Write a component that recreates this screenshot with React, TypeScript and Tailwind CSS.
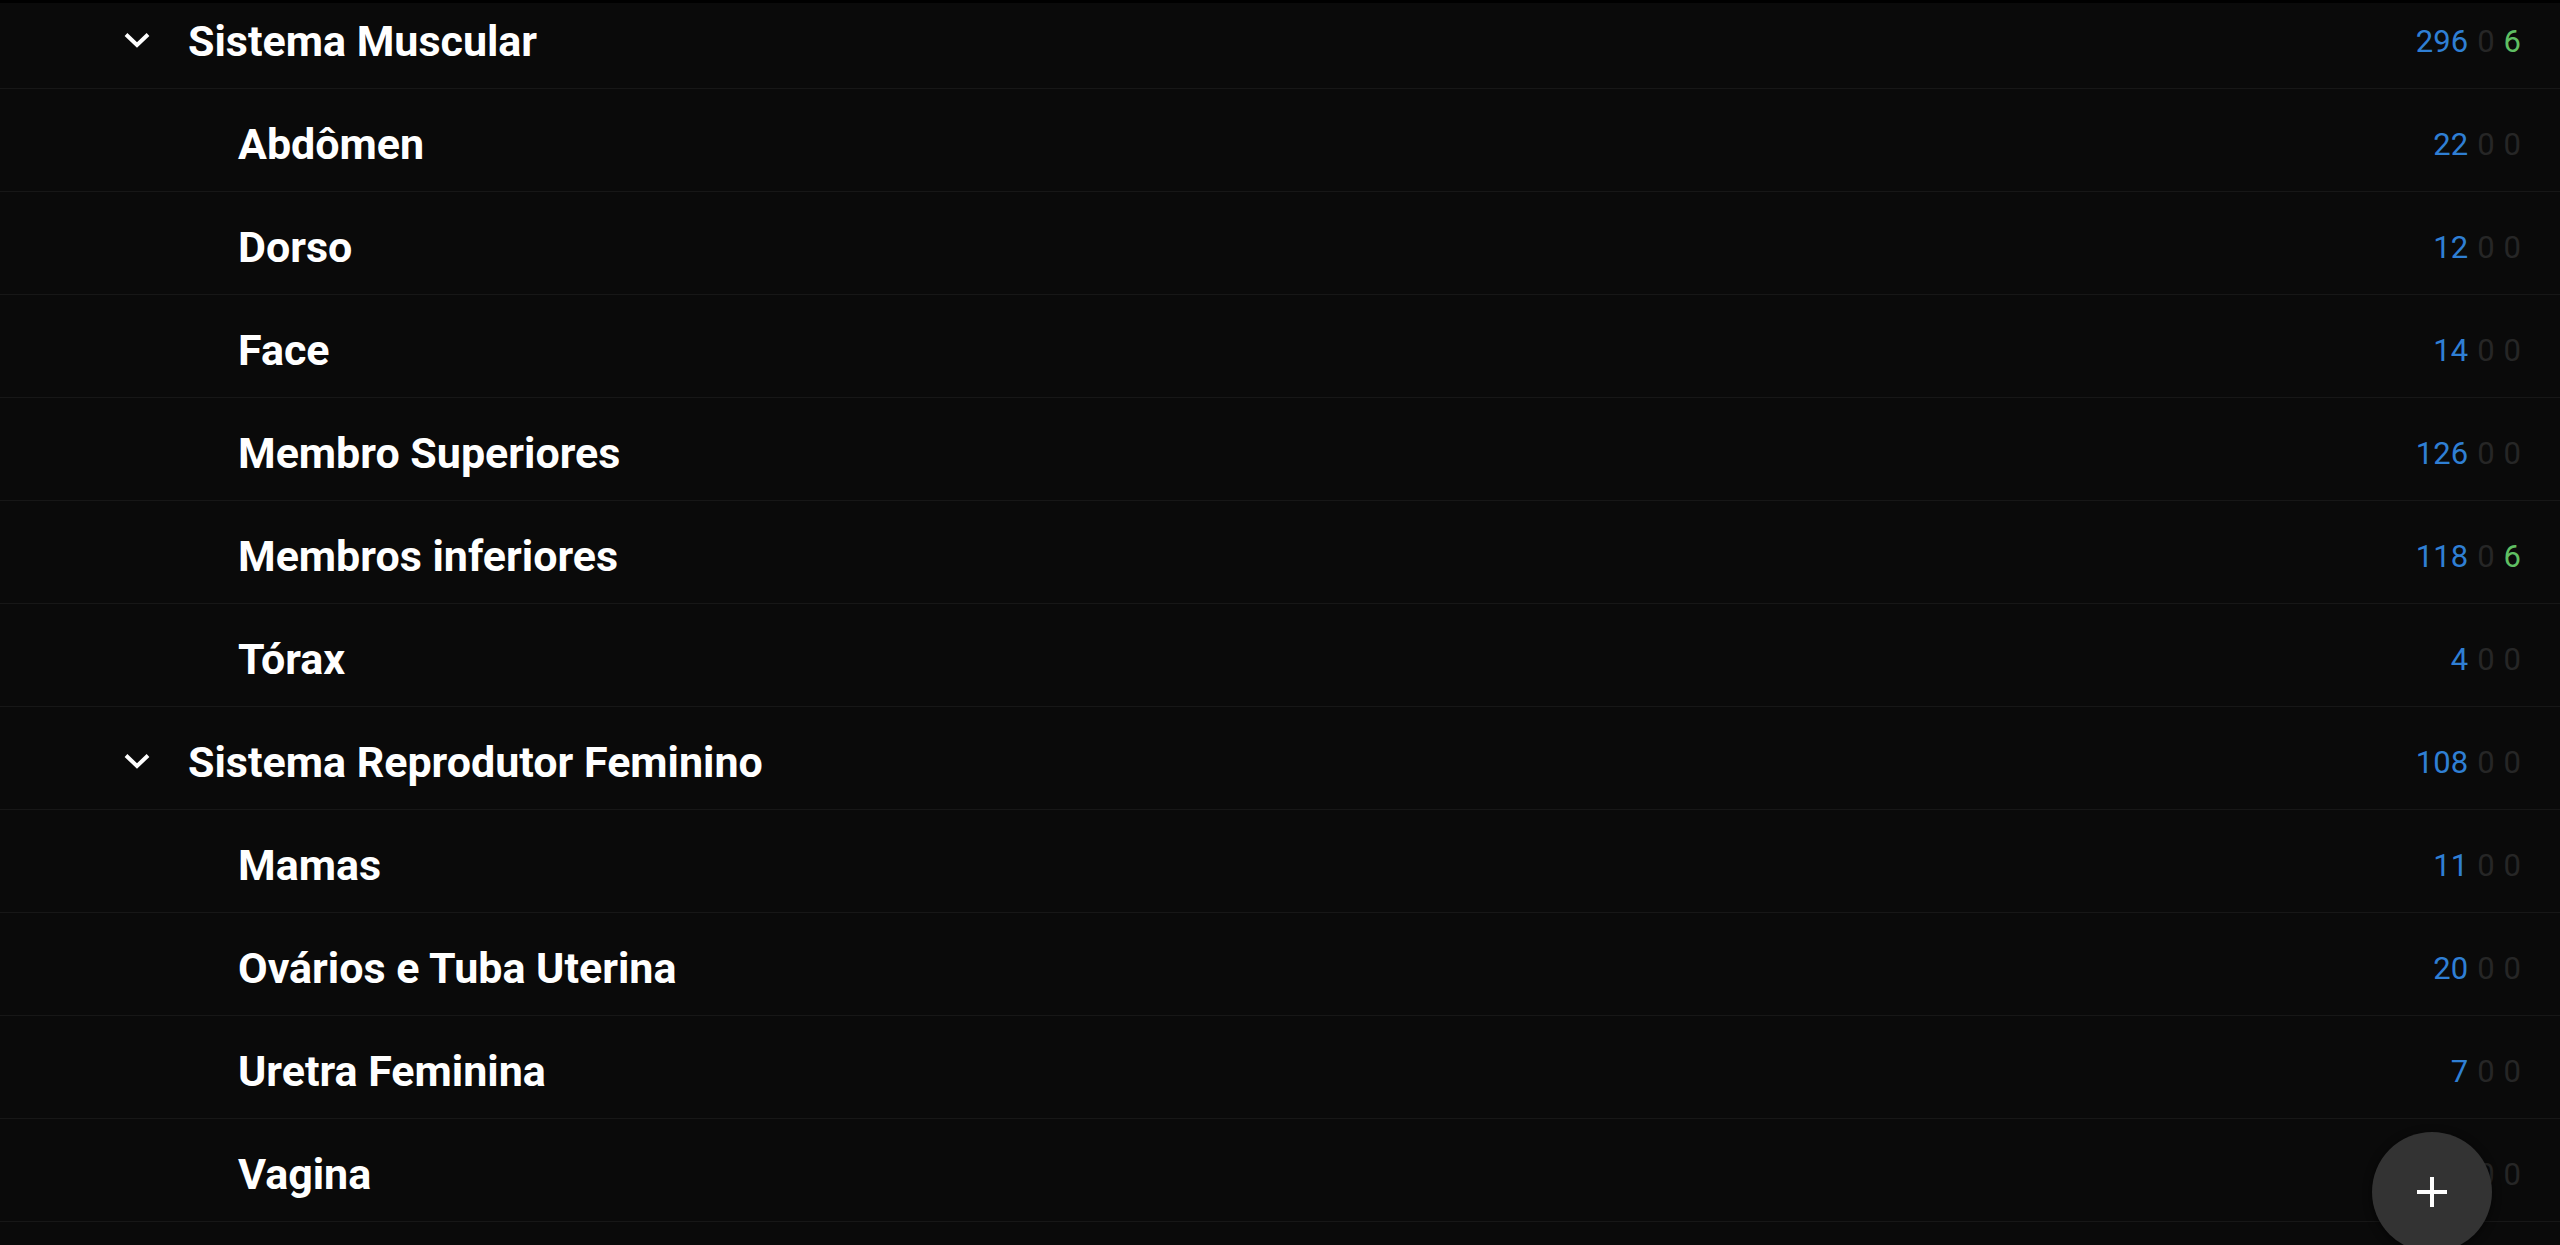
import React from "react";

type Row = { label: string; header?: boolean; a: number; b: number; c: number };

const rows: Row[] = [
  { label: "Sistema Muscular", header: true, a: 296, b: 0, c: 6 },
  { label: "Abdômen", a: 22, b: 0, c: 0 },
  { label: "Dorso", a: 12, b: 0, c: 0 },
  { label: "Face", a: 14, b: 0, c: 0 },
  { label: "Membro Superiores", a: 126, b: 0, c: 0 },
  { label: "Membros inferiores", a: 118, b: 0, c: 6 },
  { label: "Tórax", a: 4, b: 0, c: 0 },
  { label: "Sistema Reprodutor Feminino", header: true, a: 108, b: 0, c: 0 },
  { label: "Mamas", a: 11, b: 0, c: 0 },
  { label: "Ovários e Tuba Uterina", a: 20, b: 0, c: 0 },
  { label: "Uretra Feminina", a: 7, b: 0, c: 0 },
  { label: "Vagina", a: 9, b: 0, c: 0 },
];

function Chevron() {
  return (
    <svg width="28" height="16" viewBox="0 0 28 16" className="block">
      <path d="M3 2.5 L14 13 L25 2.5" fill="none" stroke="#ffffff" strokeWidth="4" strokeLinecap="butt" strokeLinejoin="miter" />
    </svg>
  );
}

export default function App() {
  return (
    <div
      className="relative w-[2560px] h-[1245px] overflow-hidden bg-[#0a0a0a]"
      style={{ fontFamily: "Roboto, 'Noto Sans', sans-serif" }}
    >
      <div className="-mt-[14px] flex flex-col">
        {rows.map((r, i) => (
          <div
            key={i}
            className="flex h-[103px] items-center border-b border-[#171717] pt-[9px] pr-[39px]"
          >
            {r.header ? (
              <div className="flex items-center">
                <div className="ml-[123px] w-[65px] -mt-[4px]">
                  <Chevron />
                </div>
                <span className="text-[43px] font-bold leading-none text-white">{r.label}</span>
              </div>
            ) : (
              <span className="ml-[238px] text-[43px] font-bold leading-none text-white">{r.label}</span>
            )}
            <div className="ml-auto flex items-center text-[31px] leading-none">
              <span className="text-[#2f7fd4]">{r.a}</span>
              <span className="ml-[9px] text-[#262626]">{r.b}</span>
              <span className={r.c > 0 ? "ml-[9px] text-[#5fbf63]" : "ml-[9px] text-[#262626]"}>{r.c}</span>
            </div>
          </div>
        ))}
      </div>
      <div className="absolute left-0 right-0 top-0 h-[3px] bg-black" />
      <button className="absolute right-[68px] bottom-[-7px] flex h-[120px] w-[120px] items-center justify-center rounded-full bg-[#333333] shadow-[0_2px_8px_rgba(0,0,0,0.6)]">
        <svg width="32" height="32" viewBox="0 0 32 32">
          <path d="M16 1 V31 M1 16 H31" stroke="#ffffff" strokeWidth="4" fill="none" />
        </svg>
      </button>
    </div>
  );
}
